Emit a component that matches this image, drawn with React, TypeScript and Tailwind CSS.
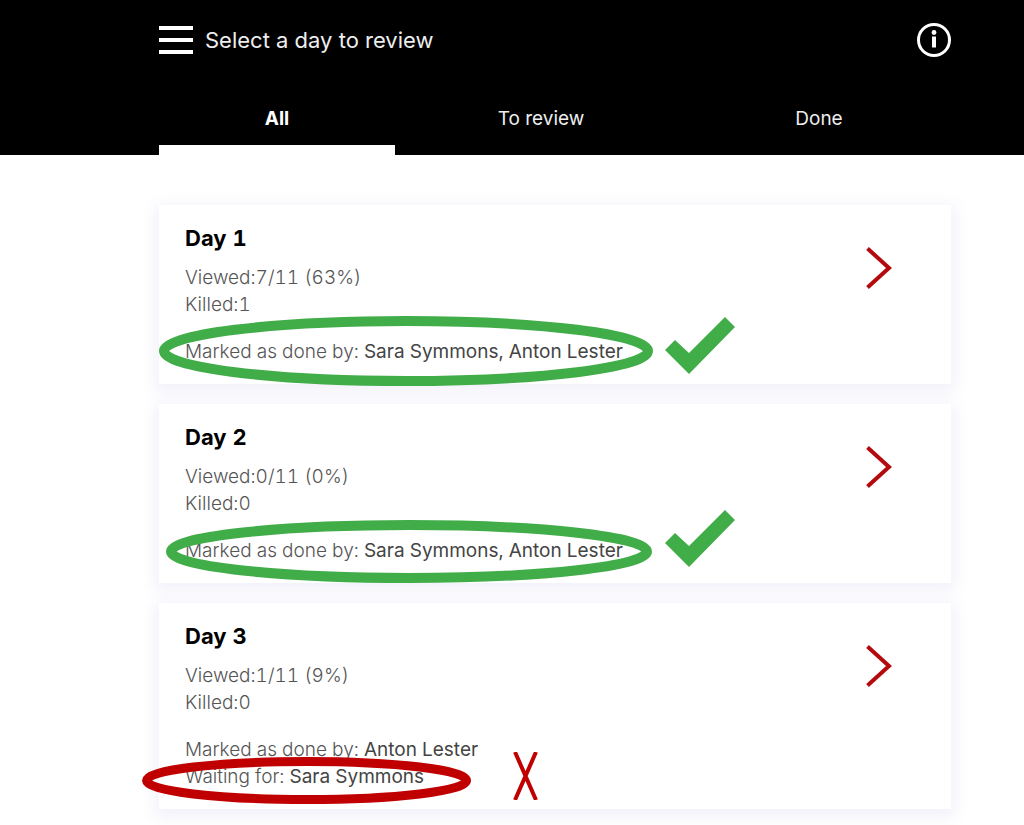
import { useState } from "react"

type Mark = { ring: string, w: number, h: number, stroke: number, sign: string }

type Day = {
    name: string
    viewed: string
    killed: number
    doneBy: string
    waitingFor?: string
    mark: Mark
}

const tabs = ["All", "To review", "Done"]

const days: Day[] = [
    {
        name: "Day 1", viewed: "7/11 (63%)", killed: 1, doneBy: "Sara Symmons, Anton Lester",
        mark: { ring: "left-0 top-[111px] text-[#41ad49]", w: 494, h: 70, stroke: 10, sign: "left-[506px] top-[112px]" },
    },
    {
        name: "Day 2", viewed: "0/11 (0%)", killed: 0, doneBy: "Sara Symmons, Anton Lester",
        mark: { ring: "left-[7px] top-[116px] text-[#41ad49]", w: 486, h: 63, stroke: 10, sign: "left-[506px] top-[106px]" },
    },
    {
        name: "Day 3", viewed: "1/11 (9%)", killed: 0, doneBy: "Anton Lester", waitingFor: "Sara Symmons",
        mark: { ring: "-left-[17px] top-[154px] text-[#c00000]", w: 329, h: 47, stroke: 9, sign: "left-[354px] top-[149px]" },
    },
]

function Ring({ mark }: { mark: Mark }) {
    return (
        <svg className={"absolute pointer-events-none " + mark.ring} width={mark.w} height={mark.h} fill="none" stroke="currentColor" strokeWidth={mark.stroke}>
            <ellipse cx={mark.w / 2} cy={mark.h / 2} rx={(mark.w - mark.stroke) / 2} ry={(mark.h - mark.stroke) / 2} />
        </svg>
    )
}

function Tick({ className }: { className: string }) {
    return (
        <svg className={"absolute pointer-events-none " + className} width="70" height="57" viewBox="0 0 70 57" fill="#41ad49">
            <path d="M0 33 L10 23 L24 36 L60 0 L70 10 L24 57 Z" />
        </svg>
    )
}

function Cross({ className }: { className: string }) {
    return (
        <svg className={"absolute pointer-events-none " + className} width="25" height="48" viewBox="0 0 25 48" fill="none" stroke="#c00000" strokeWidth="4">
            <path d="M2 0 L23 48 M23 0 L2 48" />
        </svg>
    )
}

function DayCard({ day }: { day: Day }) {
    return (
        <div className="relative flex items-start justify-between bg-white pl-[26px] pr-[59px] pt-5 pb-[19px] shadow-[0_4px_14px_4px_rgba(90,80,190,0.08)]">
            <div className="text-[19px] leading-[27px] font-light tabular-nums text-[#555]">
                <h2 className="mb-3 text-[22px] leading-[27px] font-bold text-black">{day.name}</h2>
                <p>Viewed:{day.viewed}</p>
                <p>Killed:{day.killed}</p>
                <p className="mt-5">Marked as done by: <span className="font-normal text-[#444]">{day.doneBy}</span></p>
                {day.waitingFor && <p>Waiting for: <span className="font-normal text-[#444]">{day.waitingFor}</span></p>}
            </div>
            <button className="mt-[22px] cursor-pointer" aria-label={"Open " + day.name}>
                <svg width="26" height="42" viewBox="0 0 26 42" fill="none" stroke="#b40a0e" strokeWidth="4">
                    <path d="M1.5 1.5 L23 21 L1.5 40.5" />
                </svg>
            </button>
            <Ring mark={day.mark} />
            {day.waitingFor ? <Cross className={day.mark.sign} /> : <Tick className={day.mark.sign} />}
        </div>
    )
}

function App() {
    const [active, setActive] = useState("All")

    return (
        <div className="bg-white font-['Inter','Open_Sans',sans-serif]">
            <header className="bg-black pl-[159px] pr-[73px] pt-[23px] text-[#eee]">
                <div className="flex items-center justify-between">
                    <div className="flex items-center gap-3">
                        <button className="cursor-pointer" aria-label="Menu">
                            <svg width="34" height="30" viewBox="0 0 34 30" fill="#fff">
                                <rect y="1" width="34" height="4" />
                                <rect y="13" width="34" height="4" />
                                <rect y="25" width="34" height="4" />
                            </svg>
                        </button>
                        <h1 className="text-[22px] leading-8">Select a day to review</h1>
                    </div>
                    <button className="cursor-pointer" aria-label="Information">
                        <svg width="34" height="34" viewBox="0 0 34 34" fill="none">
                            <circle cx="17" cy="17" r="15.5" stroke="#fff" strokeWidth="3" />
                            <circle cx="17" cy="9.5" r="2.4" fill="#fff" />
                            <rect x="15" y="13.5" width="4" height="11" fill="#fff" />
                        </svg>
                    </button>
                </div>
                <nav className="mt-[33px] grid grid-cols-3">
                    {tabs.map((tab) => (
                        <button
                            key={tab}
                            onClick={() => setActive(tab)}
                            className={"h-[65px] cursor-pointer border-b-10 pt-1 text-[19px] not-last:mr-7 " + (tab == active ? "border-white font-bold text-white" : "border-transparent")}
                        >
                            {tab}
                        </button>
                    ))}
                </nav>
            </header>
            <main className="flex flex-col gap-5 pl-[159px] pr-[73px] pt-[50px] pb-4">
                {days.map((day) => <DayCard key={day.name} day={day} />)}
            </main>
        </div>
    )
}

export default App
